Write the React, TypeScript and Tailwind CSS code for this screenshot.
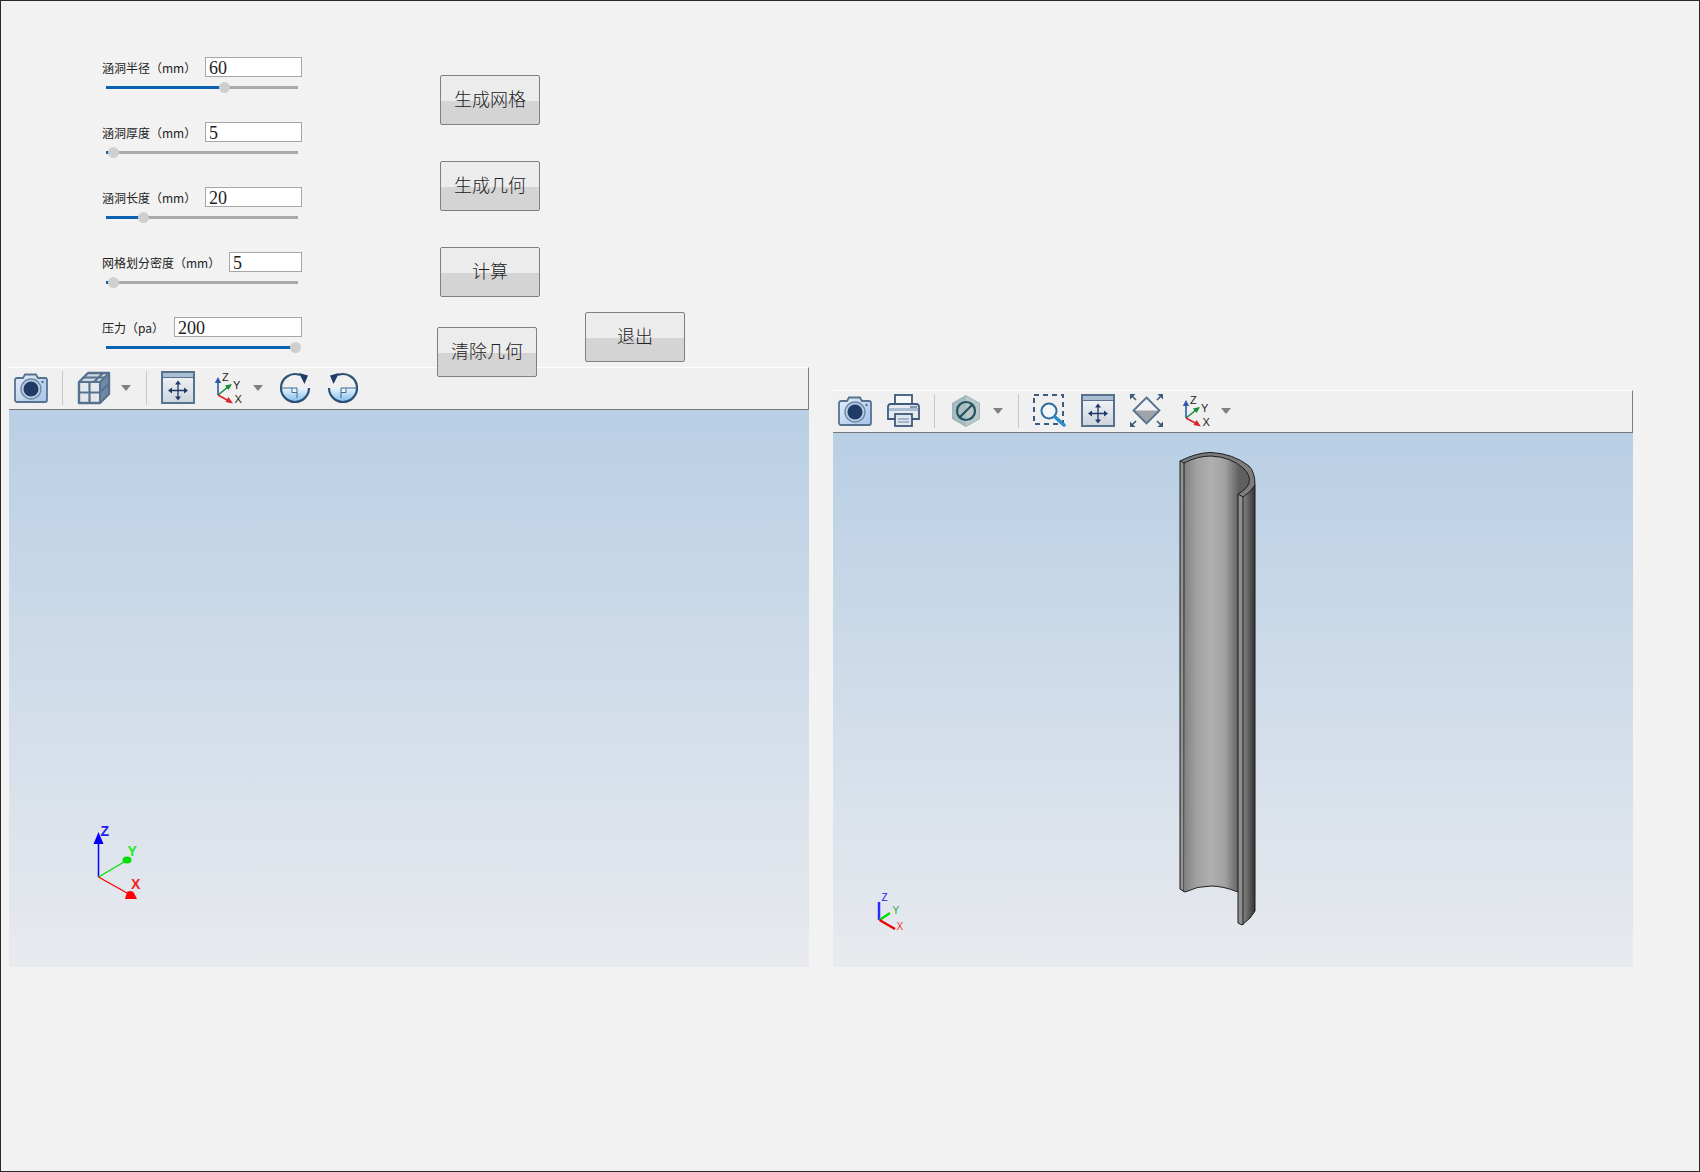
import React from "react";

const sliders = [
  { label: "涵洞半径（mm）", value: "60", input: "w-[97px]", pos: 118 },
  { label: "涵洞厚度（mm）", value: "5", input: "w-[97px]", pos: 7 },
  { label: "涵洞长度（mm）", value: "20", input: "w-[97px]", pos: 37 },
  { label: "网格划分密度（mm）", value: "5", input: "w-[73px]", pos: 7 },
  { label: "压力（pa）", value: "200", input: "w-[128px]", pos: 189 },
];

function SliderRow({ label, value, input, pos }: (typeof sliders)[number]) {
  return (
    <div className="h-[65px]">
      <div className="flex h-5 items-center justify-between">
        <span className="pt-[1px] text-[12px] leading-5 text-[#222] whitespace-nowrap [font-family:'Noto_Sans_CJK_SC','Noto_Sans',sans-serif]">
          {label}
        </span>
        <input
          readOnly
          value={value}
          className={`${input} h-5 box-border border border-[#a6a6a6] bg-white pl-[3px] pt-[3px] text-[18px] leading-none text-[#222] outline-none [font-family:'Liberation_Serif',serif]`}
        />
      </div>
      <div className="relative ml-[4px] mt-[9px] h-[3px] w-[192px] bg-[#aaaaaa]">
        <div className="absolute left-0 top-0 h-[3px] bg-[#0b62b2]" style={{ width: pos }} />
        <div
          className="absolute top-[-4px] h-[11px] w-[11px] rounded-full bg-[#cfcfcf]"
          style={{ left: pos - 5.5 }}
        />
      </div>
    </div>
  );
}

function Btn({ children, className = "" }: { children: React.ReactNode; className?: string }) {
  return (
    <button className={`box-border flex h-[50px] w-[100px] shrink-0 items-center justify-center rounded-[2px] border border-[#808080] bg-[linear-gradient(#ececec_52%,#d4d4d4_52%)] pb-[4px] text-[18px] font-light text-[#222] [font-family:'Noto_Sans_CJK_SC',sans-serif] ${className}`}>
      {children}
    </button>
  );
}

const NAVY = "#1f3b66";
const STEEL = "#56728f";

function Camera({ className = "" }: { className?: string }) {
  return (
    <svg width="34" height="30" viewBox="0 0 34 30" className={`shrink-0 ${className}`}>
      <defs>
        <linearGradient id="camBody" x1="0" y1="0" x2="1" y2="1">
          <stop offset="0" stopColor="#e6eef8" />
          <stop offset="1" stopColor="#a3c3e8" />
        </linearGradient>
      </defs>
      <path d="M1 7a2 2 0 0 1 2-2h6l2-3.500h11L24 5h7a2 2 0 0 1 2 2v20a2 2 0 0 1-2 2H3a2 2 0 0 1-2-2z" fill="url(#camBody)" stroke={STEEL} strokeWidth="1.800" />
      <circle cx="17" cy="16" r="10" fill="#b9cbe0" stroke="#6f8aa8" strokeWidth="1.400" />
      <circle cx="17" cy="16" r="7.500" fill={NAVY} />
      <circle cx="28.500" cy="9" r="1.200" fill={STEEL} />
    </svg>
  );
}

function Caret({ className = "" }: { className?: string }) {
  return (
    <svg width="10" height="6" viewBox="0 0 10 6" className={`shrink-0 ${className}`}>
      <path d="M0 0h10L5 6z" fill="#808080" />
    </svg>
  );
}

function Sep({ className = "" }: { className?: string }) {
  return <div className={`h-[34px] w-px shrink-0 bg-[#c8c8c8] ${className}`} />;
}

function Cube({ className = "" }: { className?: string }) {
  return (
    <svg width="34" height="34" viewBox="0 0 34 34" className={`shrink-0 ${className}`}>
      <path d="M2 11 11 2h21v21l-9 9H2z" fill="#e4e8ed" />
      <path d="M2 11 11 2h21l-9 9z" fill="#cfd7e0" />
      <path d="M23 11 32 2v21l-9 9z" fill="#6f88a6" />
      <path d="M2 11 11 2h21v21l-9 9H2z" fill="none" stroke={STEEL} strokeWidth="2.400" strokeLinejoin="round" />
      <path d="M2 11h21l9-9M23 11v21" fill="none" stroke={STEEL} strokeWidth="2" />
      <path d="M2 21.500h21M12.500 11v21M6.500 6.500h21M17 11l9-9M23 21.500l9-9" stroke={STEEL} strokeWidth="2.200" fill="none" />
    </svg>
  );
}

function PanArrows() {
  return (
    <g>
      <path d="M17 12v15M9.500 19.500h15" stroke={NAVY} strokeWidth="1.300" fill="none" />
      <path d="M17 9.500l-3 4h6zM17 29.500l-3-4h6zM7 19.500l4-3v6zM27 19.500l-4-3v6z" fill={NAVY} />
    </g>
  );
}

function Pan({ className = "" }: { className?: string }) {
  return (
    <svg width="34" height="33" viewBox="0 0 34 33" className={`shrink-0 ${className}`}>
      <defs>
        <linearGradient id="panBg" x1="0" y1="0" x2="0" y2="1">
          <stop offset="0" stopColor="#f6f7f9" />
          <stop offset="1" stopColor="#ccd4dd" />
        </linearGradient>
      </defs>
      <rect x="1" y="1" width="32" height="31" fill="url(#panBg)" stroke={STEEL} strokeWidth="2" />
      <rect x="2" y="2" width="30" height="4" fill="#a9bdd3" />
      <path d="M1 6.500h32" stroke={STEEL} strokeWidth="1" />
      <PanArrows />
    </svg>
  );
}

function TriadIcon({ className = "" }: { className?: string }) {
  return (
    <svg width="33" height="35" viewBox="0 0 33 35" className={`shrink-0 ${className}`}>
      <path d="M4 25V11" stroke="#2a5aa8" strokeWidth="1.600" />
      <path d="M4 7 0.800 13h6.400z" fill="#2a5aa8" />
      <path d="M4 25 14 17" stroke="#178a3c" strokeWidth="1.600" />
      <path d="M18 14 11 15.500l3.500 4.500z" fill="#178a3c" />
      <path d="M4 25 15 31" stroke="#d8242a" strokeWidth="1.600" />
      <path d="M19 33.500 11.500 32l3-5z" fill="#d8242a" />
      <text x="8" y="11" fontSize="11" fill="#222" fontFamily="'Liberation Sans',sans-serif">Z</text>
      <text x="19" y="19" fontSize="11" fill="#222" fontFamily="'Liberation Sans',sans-serif">Y</text>
      <text x="20.500" y="33" fontSize="11" fill="#222" fontFamily="'Liberation Sans',sans-serif">X</text>
    </svg>
  );
}

function Rotate({ flip = false, className = "" }: { flip?: boolean; className?: string }) {
  const gid = flip ? "rotB" : "rotA";
  return (
    <svg width="32" height="32" viewBox="0 0 32 32" className={`shrink-0 ${className}`} style={flip ? { transform: "scaleX(-1)" } : undefined}>
      <defs>
        <linearGradient id={gid} x1="0" y1="0" x2="0" y2="1">
          <stop offset="0" stopColor="#e8f5fd" />
          <stop offset="1" stopColor="#7fbde8" />
        </linearGradient>
      </defs>
      <path d="M2 16a14 14 0 0 0 28 0z" fill={`url(#${gid})`} />
      <path d="M2 16A14 14 0 0 1 21 3" fill="none" stroke="#2f5075" strokeWidth="2.200" />
      <path d="M30 16A14 14 0 0 1 2 16" fill="none" stroke="#2f5075" strokeWidth="2.200" />
      <path d="M20 1l9 2.500-3.500 8.500z" fill={NAVY} />
      <path d="M2 16h16v10" fill="none" stroke="#3f6b94" strokeWidth="1" />
      <path d="M13 16v4.500h5" fill="#f4fafe" stroke="#3f6b94" strokeWidth="1" />
    </svg>
  );
}

function Printer({ className = "" }: { className?: string }) {
  return (
    <svg width="33" height="33" viewBox="0 0 33 33" className={`shrink-0 ${className}`}>
      <rect x="8" y="1" width="17" height="10" fill="#f4f6f8" stroke="#3d5a7c" strokeWidth="1.800" />
      <path d="M1 13a3 3 0 0 1 3-3h25a3 3 0 0 1 3 3v12H1z" fill="#e6ebf1" stroke="#3d5a7c" strokeWidth="1.800" />
      <path d="M2 15.500h29" stroke="#a9bdd3" strokeWidth="3" />
      <path d="M23 13h7" stroke={STEEL} strokeWidth="1.400" />
      <rect x="8" y="20" width="17" height="12" fill="#dfe6ee" stroke="#3d5a7c" strokeWidth="1.800" />
      <path d="M11 25h11M11 28h11" stroke="#8ea5be" strokeWidth="1.400" />
    </svg>
  );
}

function Hex({ className = "" }: { className?: string }) {
  return (
    <svg width="28" height="32" viewBox="0 0 28 32" className={`shrink-0 ${className}`}>
      <path d="M14 1 27 8.500v15L14 31 1 23.500v-15z" fill="#a9bdc2" stroke="#9db8bb" strokeWidth="2" />
      <path d="M14 1 27 8.500v15L14 31z" fill="#bcc7ca" />
      <circle cx="14" cy="16" r="9" fill="none" stroke="#1f5360" strokeWidth="2.200" />
      <path d="M8 22 20 10" stroke="#1f5360" strokeWidth="2.200" />
    </svg>
  );
}

function ZoomBox({ className = "" }: { className?: string }) {
  return (
    <svg width="33" height="33" viewBox="0 0 33 33" className={`shrink-0 ${className}`}>
      <rect x="1" y="1" width="29" height="29" fill="none" stroke="#3d5a80" strokeWidth="2" strokeDasharray="5 4" />
      <circle cx="16" cy="17" r="7.500" fill="#f2f7fb" stroke="#2f6c9e" strokeWidth="2" />
      <path d="M22 23l9 8" stroke="#2a8ccb" strokeWidth="3.500" strokeLinecap="round" />
    </svg>
  );
}

function Fit({ className = "" }: { className?: string }) {
  return (
    <svg width="33" height="33" viewBox="0 0 33 33" className={`shrink-0 ${className}`}>
      <path d="M16.500 3.500 29.500 16.500H3.500z" fill="#f0f2f4" />
      <path d="M3.500 16.500h26L16.500 29.500z" fill="#a0a4a9" />
      <path d="M16.500 3.500 29.500 16.500 16.500 29.500 3.500 16.500z" fill="none" stroke={STEEL} strokeWidth="1.800" />
      <path d="M0 0h5.500L0 5.500zM33 0v5.500L27.500 0zM0 33v-5.500L5.500 33zM33 33h-5.500l5.500-5.500z" fill="#3d5a7c" />
      <path d="M2 2l4 4M31 2l-4 4M2 31l4-4M31 31l-4-4" stroke="#3d5a7c" strokeWidth="1.600" />
    </svg>
  );
}

function Viewer({ children }: { children?: React.ReactNode }) {
  return <div className="relative flex-1 bg-[linear-gradient(#b9cfe5,#e8eaee)]">{children}</div>;
}

function Toolbar({ children }: { children: React.ReactNode }) {
  return (
    <div className="box-border flex h-[43px] shrink-0 items-center border-t border-r border-b border-t-white border-r-[#808080] border-b-[#777] bg-[#f0f0f0] pb-[2px] pl-[5px]">
      {children}
    </div>
  );
}

function TubeScene() {
  return (
    <svg width="110" height="500" viewBox="1160 440 110 500" className="absolute left-[328px] top-[8px]">
      <defs>
        <linearGradient id="tubeInner" gradientUnits="userSpaceOnUse" x1="1183" y1="0" x2="1238" y2="0">
          <stop offset="0" stopColor="#808080" />
          <stop offset="0.22" stopColor="#a0a0a0" />
          <stop offset="0.5" stopColor="#b0b0b0" />
          <stop offset="0.75" stopColor="#a0a0a0" />
          <stop offset="1" stopColor="#606060" />
        </linearGradient>
        <linearGradient id="tubeOuter" gradientUnits="userSpaceOnUse" x1="1242" y1="0" x2="1254" y2="0">
          <stop offset="0" stopColor="#868686" />
          <stop offset="1" stopColor="#333" />
        </linearGradient>
      </defs>
      <path d="M1183 462Q1196 455 1210 455Q1230 456 1242 467Q1250 474 1248 482Q1246 488 1238 493V891Q1222 885 1210 885Q1196 885 1184 891Z" fill="url(#tubeInner)" />
      <path d="M1242 496L1254 484V910L1249 917L1241 924Z" fill="url(#tubeOuter)" />
      <path d="M1237 493L1242 496V924L1237 922Z" fill="#8f8f8f" />
      <path d="M1179 461L1183 462V891L1179 888Z" fill="#939393" />
      <path d="M1179 460Q1196 451.500 1210 451.500Q1232 452.500 1248 465Q1254 471 1254 484Q1250 491 1242 496L1237 493Q1246 488 1248 482Q1250 474 1242 467Q1230 456 1210 455Q1196 455 1183 462Z" fill="#7c7c7c" />
      <g fill="none" stroke="#1a1a1a" strokeWidth="1">
        <path d="M1179 460Q1196 451.500 1210 451.500Q1232 452.500 1248 465Q1254 471 1254 484V910L1249 917L1241 924L1237 922V493L1242 496Q1250 491 1254 484" />
        <path d="M1179 460V888L1184 891Q1196 885 1210 885Q1222 885 1237 891" />
        <path d="M1183 462V891" />
        <path d="M1183 462Q1196 455 1210 455Q1230 456 1242 467Q1250 474 1248 482Q1246 488 1237 493" />
        <path d="M1242 496V924" />
        <path d="M1179 460L1183 462" />
      </g>
    </svg>
  );
}

export default function App() {
  return (
    <div className="relative box-border h-[1172px] w-[1700px] overflow-hidden border border-[#2a2a2a] bg-[#f2f2f2]">
      <div className="relative z-10 flex h-[366px] pl-[101px]">
        <div className="box-border w-[200px] pt-[56px]">
          {sliders.map((s) => (
            <SliderRow key={s.label} {...s} />
          ))}
        </div>
        <div className="ml-[138px] flex flex-col pt-[74px]">
          <Btn>生成网格</Btn>
          <Btn className="mt-[36px]">生成几何</Btn>
          <Btn className="mt-[36px]">计算</Btn>
          <div className="mt-[15px] flex items-start">
            <Btn className="ml-[-3px] mt-[15px]">清除几何</Btn>
            <Btn className="ml-[48px]">退出</Btn>
          </div>
        </div>
      </div>

      <div className="flex items-start gap-[24px] pl-[8px]">
        <div className="flex h-[600px] w-[800px] flex-col">
          <Toolbar>
            <Camera />
            <Sep className="ml-[14px]" />
            <Cube className="ml-[14px]" />
            <Caret className="ml-[10px]" />
            <Sep className="ml-[15px]" />
            <Pan className="ml-[14px]" />
            <TriadIcon className="ml-[19px]" />
            <Caret className="ml-[6px]" />
            <Rotate className="ml-[16px]" />
            <Rotate flip className="ml-[16px]" />
          </Toolbar>
          <Viewer>
            <svg width="90" height="100" viewBox="70 810 90 100" className="absolute left-[61px] top-[400px]">
              <path d="M98.500 877V842" stroke="#0000ff" strokeWidth="1.500" />
              <path d="M98.500 832l-5 12h10z" fill="#0000ff" />
              <path d="M98.500 877 124 862" stroke="#00e000" strokeWidth="1.300" />
              <ellipse cx="127" cy="860" rx="4.500" ry="3.500" fill="#00e000" />
              <path d="M98.500 877 127 893" stroke="#ff0000" strokeWidth="1.300" />
              <path d="M137 899h-12l2-7c3-2 6-1 7 1z" fill="#ff0000" />
              <text x="100.500" y="836" fontSize="14" fontWeight="700" fill="#2222ee" fontFamily="'Liberation Sans',sans-serif">Z</text>
              <text x="127.500" y="856" fontSize="14" fontWeight="700" fill="#22ee22" fontFamily="'Liberation Sans',sans-serif">Y</text>
              <text x="131" y="889" fontSize="14" fontWeight="700" fill="#ee2222" fontFamily="'Liberation Sans',sans-serif">X</text>
            </svg>
          </Viewer>
        </div>

        <div className="mt-[23px] flex h-[577px] w-[800px] flex-col">
          <Toolbar>
            <Camera />
            <Printer className="ml-[15px]" />
            <Sep className="ml-[14px]" />
            <Hex className="ml-[17px]" />
            <Caret className="ml-[13px]" />
            <Sep className="ml-[15px]" />
            <ZoomBox className="ml-[14px]" />
            <Pan className="ml-[15px]" />
            <Fit className="ml-[15px]" />
            <TriadIcon className="ml-[19px]" />
            <Caret className="ml-[6px]" />
          </Toolbar>
          <Viewer>
            <TubeScene />
            <svg width="60" height="60" viewBox="860 885 60 60" className="absolute left-[27px] top-[452px]">
              <path d="M879 920V902" stroke="#2a2aff" strokeWidth="2.500" />
              <path d="M879.500 920 890 913" stroke="#00dd00" strokeWidth="2.200" />
              <path d="M879.500 920 895 929" stroke="#ee0000" strokeWidth="2.400" />
              <text x="881.500" y="901" fontSize="10" fill="#2222ee" fontFamily="'Liberation Sans',sans-serif">Z</text>
              <text x="892.500" y="914" fontSize="10" fill="#22aa44" fontFamily="'Liberation Sans',sans-serif">Y</text>
              <text x="896.500" y="930" fontSize="10" fill="#ee3333" fontFamily="'Liberation Sans',sans-serif">X</text>
            </svg>
          </Viewer>
        </div>
      </div>
    </div>
  );
}
